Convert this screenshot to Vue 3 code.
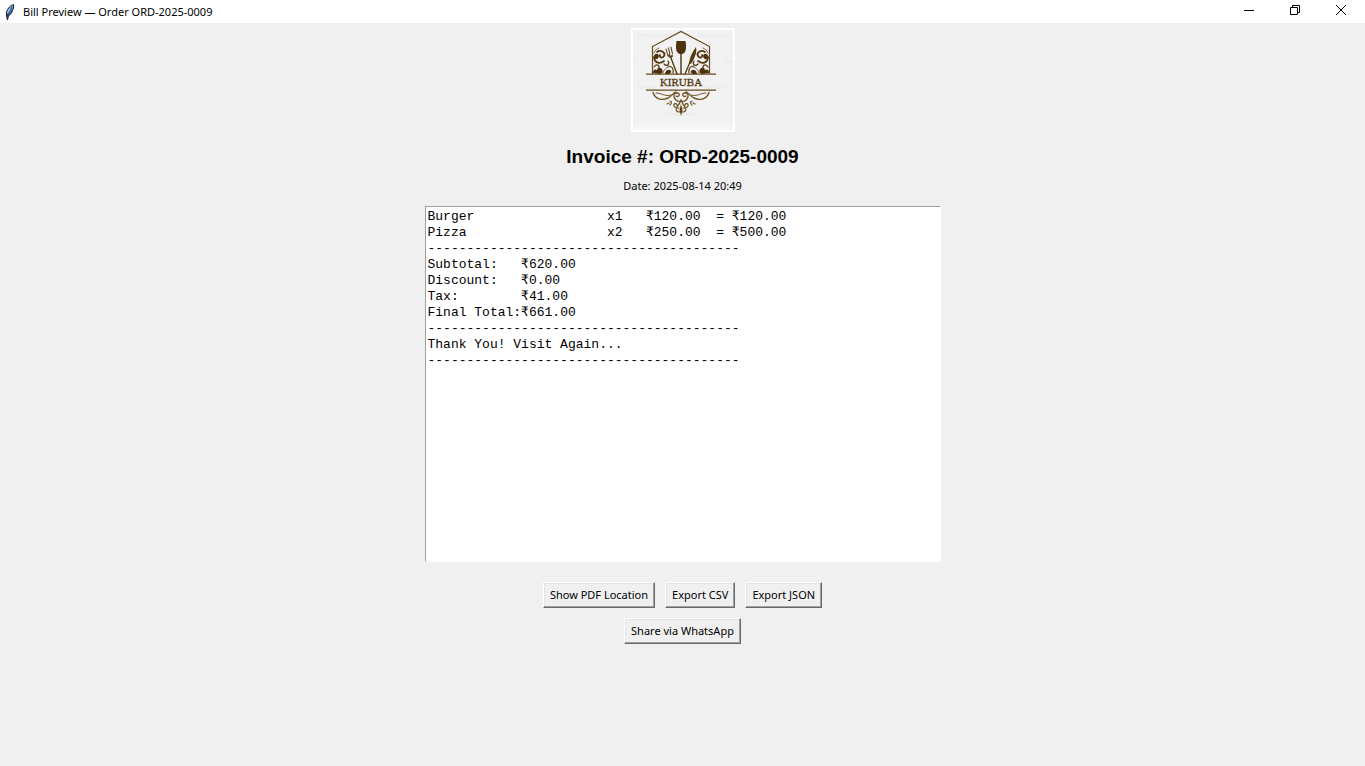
<script setup>
import { ref } from 'vue'

const orderId = 'ORD-2025-0009'
const rule = '-'.repeat(40)
const items = [
  { name: 'Burger', qty: 1, price: '120.00', total: '120.00' },
  { name: 'Pizza', qty: 2, price: '250.00', total: '500.00' }
]
const totals = [
  ['Subtotal:', '620.00'],
  ['Discount:', '0.00'],
  ['Tax:', '41.00'],
  ['Final Total:', '661.00']
]

const bill = ref(
  [
    ...items.map(i => `${i.name.padEnd(23)}x${i.qty}   ₹${i.price}  = ₹${i.total}`),
    rule,
    ...totals.map(([label, value]) => `${label.padEnd(12)}₹${value}`),
    rule,
    'Thank You! Visit Again...',
    rule
  ].join('\n')
)
</script>

<template>
  <div class="window">
    <header class="titlebar">
      <svg class="feather" viewBox="0 0 16 18" width="16" height="18" aria-hidden="true">
        <path d="M5 17L4 13L4 9L6 5L9 2L12 1L12 5L10 10L7 13L6 17Z" fill="#1b2a3c" />
        <path d="M5 11L6 7L9 3L11 2L11 5L9 9L7 12Z" fill="#5b9fe0" />
        <path d="M5 10L6 7L9 3L8 7L6 10Z" fill="#a5cbf0" />
        <path d="M10 4L7 10L5 16" fill="none" stroke="#24476e" stroke-width="1" />
      </svg>
      <span class="title">Bill Preview — Order {{ orderId }}</span>
      <div class="controls">
        <button type="button" aria-label="Minimize">
          <svg viewBox="0 0 12 12" width="12" height="12"><path d="M1 6.5H11" /></svg>
        </button>
        <button type="button" aria-label="Restore">
          <svg viewBox="0 0 12 12" width="12" height="12"><path d="M1.500 3.500H8.500V10.500H1.500ZM3.500 3.500V1.500H10.500V8.500H8.500" /></svg>
        </button>
        <button type="button" aria-label="Close">
          <svg viewBox="0 0 12 12" width="12" height="12"><path d="M1 1L11 11M11 1L1 11" /></svg>
        </button>
      </div>
    </header>

    <main class="content">
      <svg class="logo" viewBox="0 0 104 104" width="104" height="104" role="img" aria-label="Kiruba">
        <rect width="104" height="104" fill="#fff" />
        <rect x="2" y="2" width="100" height="96" fill="#f2f2f2" />
        <rect x="2" y="97" width="100" height="5" fill="#f6f6f6" />
        <g class="mark">
          <text x="7" y="9">Design.com</text>
          <text x="67" y="9">Design.com</text>
          <text x="2" y="35">n</text>
          <text x="94" y="35">De</text>
          <text x="7" y="61">Design</text>
          <text x="73" y="61">ign.com</text>
          <text x="35" y="88">Design.com</text>
        </g>
        <g fill="none" stroke="#664a1c" stroke-width="1.200">
          <path d="M21.500 46V18.500L50 3.500L78.500 18.500V46" />
          <path d="M15 46.200H85M15 62.200H85" />
        </g>
        <path d="M45.500 13H54.500Q56 22 53.500 24.500Q52 26 50.700 26V46H49.300V26Q48 26 46.500 24.500Q44 22 45.500 13Z" fill="#4d320c" />
        <g fill="none" stroke="#553a10" stroke-linecap="round">
          <path stroke-width="1" d="M35 21L37 28M37.500 20L39 27M40 19L41.500 26" />
          <path stroke-width="2" d="M38 27.500Q39 30 41 28" />
          <path stroke-width="1.400" d="M40 30L46 46" />
          <path stroke-width="1.300" d="M59 34L54 46" />
        </g>
        <path d="M65 19Q67 25 60 36L58 35Q59 27 65 19Z" fill="#553a10" />
        <g v-for="side in ['', 'translate(100 0) scale(-1 1)']" :key="side" :transform="side">
          <g fill="none" stroke="#553a10" stroke-linecap="round">
            <path stroke-width="1.800" d="M26 24C30 21 35 25 33 28C31 31 28 29 29 27M23 29C23 34 28 37 33 33" />
            <path stroke-width="1.200" d="M23 39C26 35 30 38 27 41M37 33C39 36 36 39 33 36M37 38C41 38 43 41 42 45" />
            <path stroke-width="0.800" d="M23 25C24 22 26 21 28 20M32 45C33 41 36 39 38 39" />
          </g>
          <path d="M23 27Q27 24 28 28Q27 32 24 31ZM22 45Q22 40 26 42Q28 38 31 41Q33 45 29 46ZM34 46Q35 41 39 42Q42 44 38 46Z" fill="#4d320c" />
          <g fill="none" stroke="#735624" stroke-linecap="round">
            <path stroke-width="1.400" d="M22 64.500C24 71 31 73 37 70C41 68 42 65 45 64" />
            <path stroke-width="1" d="M25 65C31 65 34 69 40 67" />
            <path stroke-width="1.300" d="M49 74C42 72 41 65 46 65C50 65 48 70 45 68M50 72C48 77 45 82 43 78C42 75 46 75 46 77" />
            <path stroke-width="1.200" d="M39 73Q42 74 39 77M36 76L38 75M49 84C44 84 44 79 48 80" />
          </g>
        </g>
        <path d="M50 76L51.500 82L50 88L48.500 82Z" fill="#60430f" />
        <text class="brand" x="50" y="58" text-anchor="middle">KIRUBA</text>
      </svg>

      <h1>Invoice #: {{ orderId }}</h1>
      <p class="date">Date: 2025-08-14 20:49</p>

      <textarea v-model="bill" class="bill" aria-label="Bill" spellcheck="false" readonly></textarea>

      <div class="row">
        <button type="button" class="btn">Show PDF Location</button>
        <button type="button" class="btn">Export CSV</button>
        <button type="button" class="btn">Export JSON</button>
      </div>
      <div class="row">
        <button type="button" class="btn">Share via WhatsApp</button>
      </div>
    </main>
  </div>
</template>

<style>
body {
  background: #f0f0f0;
}
</style>

<style scoped>
.window {
  min-height: 100vh;
  background: #f0f0f0;
  color: #000;
  font-family: "Noto Sans", sans-serif;
  font-size: 11px;
}
.titlebar {
  display: flex;
  align-items: center;
  height: 23px;
  padding: 0 1px 0 2px;
  background: #fff;
}
.title {
  margin-left: 5px;
  line-height: 22px;
}
.controls {
  display: flex;
  align-self: stretch;
  margin-left: auto;
}
.controls button {
  display: flex;
  align-items: center;
  justify-content: center;
  width: 46px;
  padding: 0 0 3px;
  border: 0;
  background: transparent;
}
.controls path {
  fill: none;
  stroke: #000;
  stroke-width: 1;
}
.content {
  display: flex;
  flex-direction: column;
  align-items: center;
  padding: 5px 0;
}
.logo {
  display: block;
}
.mark {
  fill: #e8e8e8;
  font: 6px "Liberation Sans", sans-serif;
}
.brand {
  fill: #553a10;
  stroke: #553a10;
  stroke-width: 0.3px;
  font: 11px "Liberation Serif", serif;
}
h1 {
  margin: 13px 0 0;
  font: bold 19px/24px "Liberation Sans", Arial, sans-serif;
}
.date {
  margin: 9px 0 0;
  line-height: 16px;
}
.bill {
  box-sizing: border-box;
  width: 516px;
  max-width: 100%;
  height: 356px;
  margin: 12px 0 10px;
  padding: 2px;
  border: 1px solid #fff;
  border-top-color: #a0a0a0;
  border-left-color: #a0a0a0;
  outline: 0;
  background: #fff;
  color: #000;
  font: 13px/16px "Liberation Mono", "Courier New", monospace;
  resize: none;
}
.row {
  display: flex;
  gap: 10px;
  margin-top: 10px;
}
.btn {
  height: 26px;
  padding: 0 6px;
  border: 1px solid;
  border-color: #fff #696969 #696969 #fff;
  background: #f0f0f0;
  box-shadow: inset -1px -1px #a0a0a0, inset 1px 1px #e3e3e3;
  color: #000;
  font: 11px/16px "Noto Sans", sans-serif;
}
</style>
